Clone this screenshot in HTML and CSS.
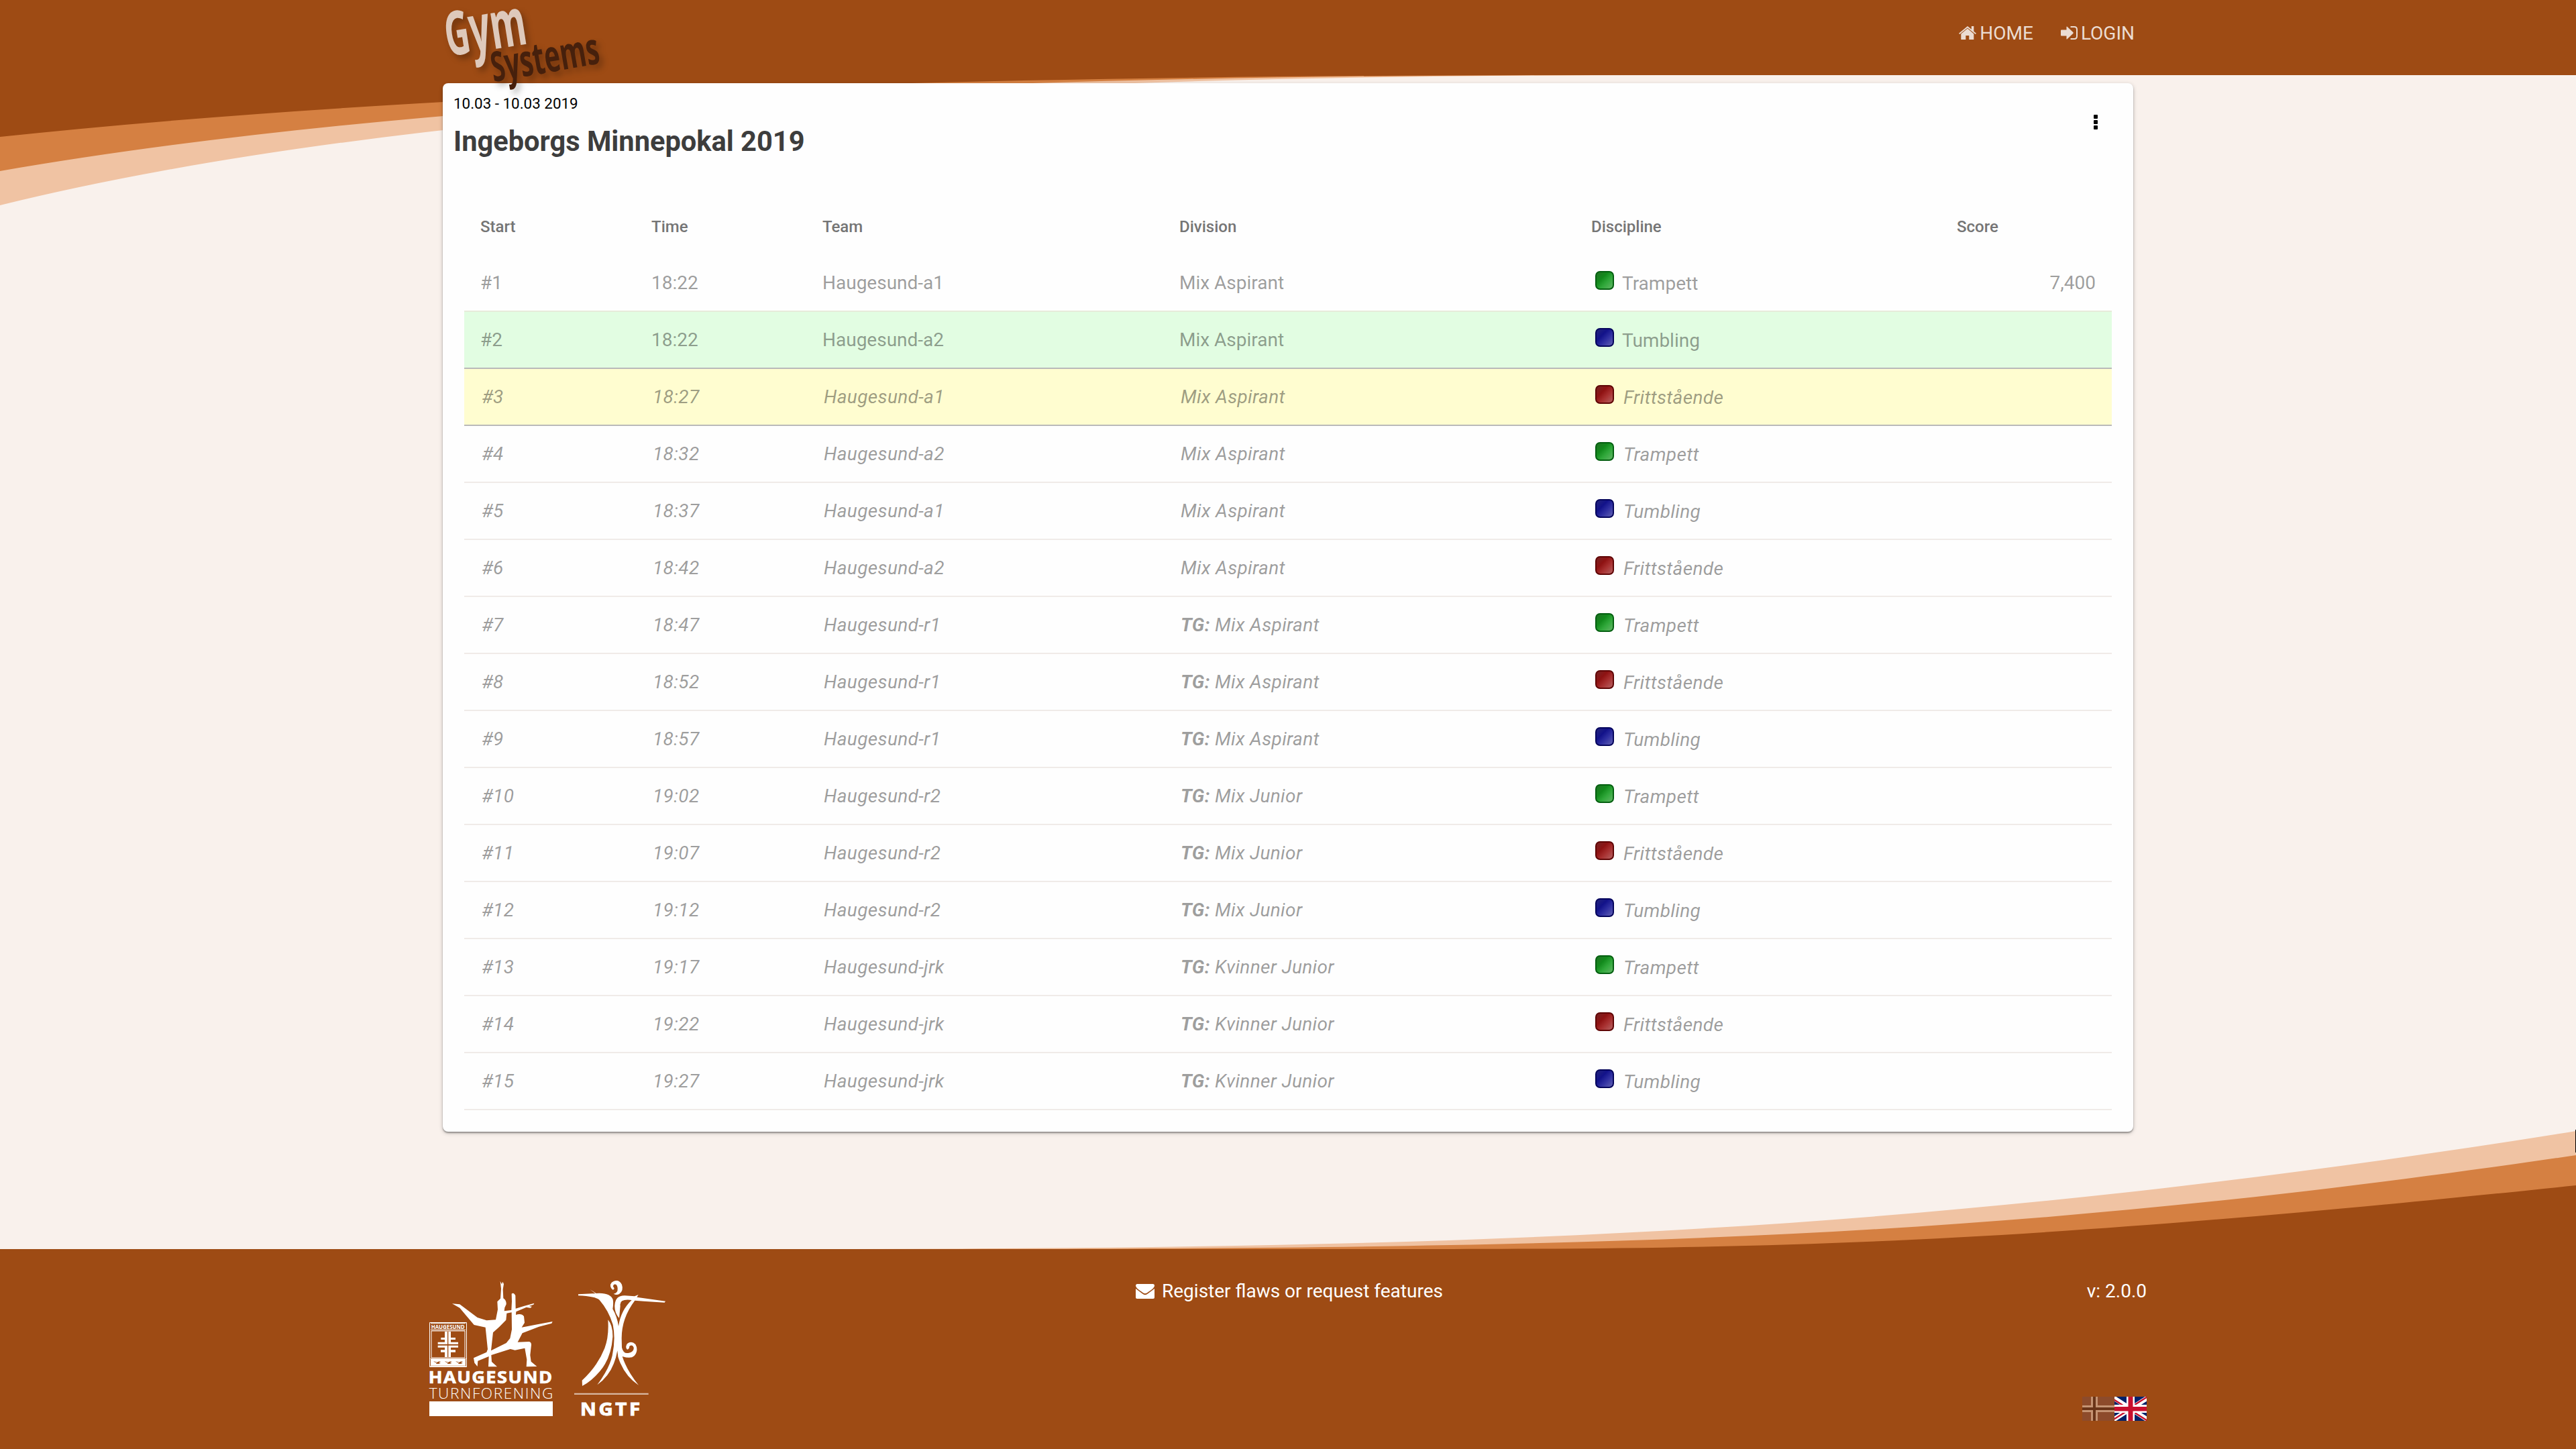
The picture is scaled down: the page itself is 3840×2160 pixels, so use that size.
FILE: index.html
```html
<!DOCTYPE html>
<html lang="en">
<head>
<meta charset="utf-8">
<title>GymSystems</title>
<link rel="stylesheet" href="styles.css">
</head>
<body>
<svg class="swoosh swoosh-top" viewBox="0 0 3840 320"><path class="light" d="M0 0V306Q784 112 2477 112H3840V0z"/><path class="mid" d="M0 0V255Q824 112 2380 112H3840V0z"/><path class="dark" d="M0 0V204Q864 112 2354 112H3840V0z"/></svg>
<svg class="swoosh swoosh-bottom" viewBox="0 1660 3840 203"><path class="light" d="M3840 1863V1686C2840 1846 2140 1862 1140 1862V1863z"/><path class="mid" d="M3840 1863V1722C2940 1855 2340 1862 1240 1862V1863z"/><path class="dark" d="M3840 1863V1767C2990 1856 2640 1862 2090 1862V1863z"/></svg>
<span class="edge-mark"></span>
<header class="topbar">
  <svg class="brand" viewBox="0 0 260 150"><g transform="rotate(-9 54 82)"><text class="brand-gym" x="28" y="80" textLength="122" lengthAdjust="spacingAndGlyphs">G<tspan class="brand-tall">ym</tspan></text></g><g transform="rotate(-10 98 123)"><text class="brand-systems" x="96" y="122" textLength="163" lengthAdjust="spacingAndGlyphs">S<tspan class="brand-tall">ystems</tspan></text></g></svg>
  <nav class="menu">
    <a class="home"><svg width="26" height="20" viewBox="0 0 26 20"><path d="M13 3.6 3.3 11.6V20h7v-6h5v6h7v-8.400z"/><path d="M13 0 0 10.700l1.300 1.400L13 2.500l11.700 9.600 1.300-1.400-3.700-3V0h-3.500v4.800z"/></svg>HOME</a>
    <a class="login"><svg width="25" height="20" viewBox="0 0 25 20"><path d="M0 6.500Q0 5.500 1 5.500H8.500V1Q8.500 0 9.500.7L18.500 9.300Q19 10 18.500 10.700L9.500 19.300Q8.500 20 8.500 19V14.500H1Q0 14.500 0 13.500z"/><path class="stroke" d="M14.500 1H20Q24 1 24 5V15Q24 19 20 19H14.500"/></svg>LOGIN</a>
  </nav>
</header>
<main class="card">
  <div class="card-head">
    <div><p class="date">10.03 - 10.03 2019</p><h1>Ingeborgs Minnepokal 2019</h1></div>
    <div class="more"><i></i><i></i><i></i></div>
  </div>
  <table>
    <colgroup><col class="c-start"><col class="c-time"><col class="c-team"><col class="c-division"><col class="c-discipline"><col class="c-score"></colgroup>
    <thead><tr><th>Start</th><th>Time</th><th>Team</th><th>Division</th><th>Discipline</th><th>Score</th></tr></thead>
    <tbody>
      <tr class="done before-current"><td>#1</td><td>18:22</td><td>Haugesund-a1</td><td>Mix Aspirant</td><td><div class="disc"><b class="sq green"></b><span>Trampett</span></div></td><td class="score">7,400</td></tr>
      <tr class="done current"><td>#2</td><td>18:22</td><td>Haugesund-a2</td><td>Mix Aspirant</td><td><div class="disc"><b class="sq blue"></b><span>Tumbling</span></div></td><td></td></tr>
      <tr class="next"><td>#3</td><td>18:27</td><td>Haugesund-a1</td><td>Mix Aspirant</td><td><div class="disc"><b class="sq red"></b><span>Frittstående</span></div></td><td></td></tr>
      <tr><td>#4</td><td>18:32</td><td>Haugesund-a2</td><td>Mix Aspirant</td><td><div class="disc"><b class="sq green"></b><span>Trampett</span></div></td><td></td></tr>
      <tr><td>#5</td><td>18:37</td><td>Haugesund-a1</td><td>Mix Aspirant</td><td><div class="disc"><b class="sq blue"></b><span>Tumbling</span></div></td><td></td></tr>
      <tr><td>#6</td><td>18:42</td><td>Haugesund-a2</td><td>Mix Aspirant</td><td><div class="disc"><b class="sq red"></b><span>Frittstående</span></div></td><td></td></tr>
      <tr><td>#7</td><td>18:47</td><td>Haugesund-r1</td><td><strong>TG:</strong> Mix Aspirant</td><td><div class="disc"><b class="sq green"></b><span>Trampett</span></div></td><td></td></tr>
      <tr><td>#8</td><td>18:52</td><td>Haugesund-r1</td><td><strong>TG:</strong> Mix Aspirant</td><td><div class="disc"><b class="sq red"></b><span>Frittstående</span></div></td><td></td></tr>
      <tr><td>#9</td><td>18:57</td><td>Haugesund-r1</td><td><strong>TG:</strong> Mix Aspirant</td><td><div class="disc"><b class="sq blue"></b><span>Tumbling</span></div></td><td></td></tr>
      <tr><td>#10</td><td>19:02</td><td>Haugesund-r2</td><td><strong>TG:</strong> Mix Junior</td><td><div class="disc"><b class="sq green"></b><span>Trampett</span></div></td><td></td></tr>
      <tr><td>#11</td><td>19:07</td><td>Haugesund-r2</td><td><strong>TG:</strong> Mix Junior</td><td><div class="disc"><b class="sq red"></b><span>Frittstående</span></div></td><td></td></tr>
      <tr><td>#12</td><td>19:12</td><td>Haugesund-r2</td><td><strong>TG:</strong> Mix Junior</td><td><div class="disc"><b class="sq blue"></b><span>Tumbling</span></div></td><td></td></tr>
      <tr><td>#13</td><td>19:17</td><td>Haugesund-jrk</td><td><strong>TG:</strong> Kvinner Junior</td><td><div class="disc"><b class="sq green"></b><span>Trampett</span></div></td><td></td></tr>
      <tr><td>#14</td><td>19:22</td><td>Haugesund-jrk</td><td><strong>TG:</strong> Kvinner Junior</td><td><div class="disc"><b class="sq red"></b><span>Frittstående</span></div></td><td></td></tr>
      <tr><td>#15</td><td>19:27</td><td>Haugesund-jrk</td><td><strong>TG:</strong> Kvinner Junior</td><td><div class="disc"><b class="sq blue"></b><span>Tumbling</span></div></td><td></td></tr>
    </tbody>
  </table>
</main>
<footer>
  <div class="footer-inner">
    <div class="logos">
      <svg class="logo-ht" width="184" height="202" viewBox="60 87 552 606">
        <path d="M377 89L384 103L388 92L393 102L389 126L391 166Q405 175 404 193L397 208L395 223L427 219L429 180L428 146Q437 137 445 154L446 212L485 200L529 188L526 194L506 201L519 203L512 209L494 206L448 226L447 240Q472 232 483 247L486 275L473 296L535 284L611 270L607 278L550 293L476 322L455 362L506 360Q516 362 516 374L511 420L515 449L541 471L494 472L496 440L487 389L443 398L422 393L337 420L339 450L363 472L324 472L326 426L277 446L275 471L262 455L258 433L316 407L321 394L311 296L260 285L196 209L162 190L196 193L275 252L316 265L357 262L366 216L364 181L378 167L381 123zM345 319L336 400L404 366L421 345L429 305L428 229L406 233L403 263L372 295z" fill-rule="evenodd"/>
        <g class="line"><path d="M61.500 274.500h165v198h-165zM66 278h156M66 307h156M69 312h150v120H69zM64 436h160M64 469h160" stroke-width="3"/></g>
        <text x="68" y="302" class="shield-label" textLength="150" lengthAdjust="spacingAndGlyphs">HAUGESUND</text>
        <path d="M129 315h12v56H98v-9h31v-11h-17v-9h17zM145 315h11v27h21v9h-21v11h33v9h-44zM98 377h43v52h-12v-22h-18v-10h18v-11H98zM145 377h44v9h-33v11h21v10h-21v22h-11zM66 438h156v29H66z"/>
        <path class="birds" d="M78 447q10 3 17 5q8-6 17-2q-7 2-9 6l8 3h-22l5-5q-8 1-16-7zM128 447q10 3 17 5q8-6 17-2q-7 2-9 6l8 3h-22l5-5q-8 1-16-7zM177 447q10 3 17 5q8-6 17-2q-7 2-9 6l8 3h-22l5-5q-8 1-16-7z"/>
        <text x="56" y="547" class="ht-name" textLength="558" lengthAdjust="spacingAndGlyphs">HAUGESUND</text>
        <text x="59" y="614" class="ht-sub" textLength="554" lengthAdjust="spacing">TURNFORENING</text>
        <path d="M60 627h552v66H60z"/>
      </svg>
      <svg class="logo-ngtf" width="136" height="202" viewBox="708 87 408 606">
        <path d="M884 90Q908 80 921 105Q930 133 909 147Q897 154 884 146Q904 143 902 121Q900 100 886 104Q878 111 886 119Q889 125 881 128Q868 119 870 104Q874 94 884 90z"/>
        <path d="M726 148L820 143Q872 144 881 172Q884 188 880 214Q900 248 906 291Q916 220 965 174Q908 167 914 200L909 255Q887 230 889 197Q892 153 934 154L978 157L995 150L988 161L1116 179L1112 185L1018 179L979 176Q920 254 920 344L921 386Q928 417 953 410Q976 405 974 386Q968 370 955 380Q954 394 945 395Q934 384 945 369Q964 354 982 372Q997 399 976 424Q961 438 923 426Q943 489 996 555Q930 511 904 428L901 400Q884 501 811 553Q865 480 878 423Q894 348 881 284Q862 221 821 174Q804 157 726 154zM779 127L807 145L843 162Q862 172 865 187Q859 162 820 158z"/>
        <path d="M859 262Q881 288 880 339Q873 434 823 492Q784 538 744 558L743 533Q812 470 844 389Q864 337 859 262z"/>
        <path class="rule" d="M708 590h332v7H708z"/>
        <text x="735" y="691" class="ngtf-name" textLength="278" lengthAdjust="spacingAndGlyphs">NGTF</text>
      </svg>
    </div>
    <a class="contact"><svg width="28" height="22" viewBox="0 0 28 22"><path d="M2 0H26Q28 0 28 2.500C28 6 22 9.500 18 12.500Q14 16 10 12.500C6 9.500 0 6 0 2.500Q0 0 2 0z"/><path d="M0 7L10 14.500Q14 18 18 14.500L28 7V20Q28 22 26 22H2Q0 22 0 20z"/></svg>Register flaws or request features</a>
    <div class="meta">
      <span>v: 2.0.0</span>
      <div class="flags">
        <svg class="flag-no" width="48" height="36" viewBox="0 0 48 36"><path fill="#754b4f" d="M0 0h48v36H0z"/><path fill="#fff" d="M13 0h10v36H13zM0 13h48v10H0z"/><path fill="#1c1420" d="M16 0h4v36h-4zM0 16h48v4H0z"/></svg>
        <svg width="48" height="36" viewBox="0 0 48 36"><path fill="#012169" d="M0 0h48v36H0z"/><path stroke="#fff" stroke-width="7" d="M-4 0L52 36M52 0L-4 36"/><path stroke="#c8102e" stroke-width="2.500" d="M-3 3L24 20M24 16L51-1M24 20L51 37M-3 35L24 18"/><path fill="#fff" d="M18 0h12v36H18zM0 12h48v12H0z"/><path fill="#c8102e" d="M20.500 0h7v36h-7zM0 15h48v6.500H0z"/></svg>
      </div>
    </div>
  </div>
</footer>
</body>
</html>
```
FILE: styles.css
```css
* { box-sizing: border-box; }
html, body { height: 100%; }
body {
  margin: 0;
  position: relative;
  display: flex;
  flex-direction: column;
  overflow: hidden;
  background: #f9f1ec;
  font-family: Roboto, "Liberation Sans", sans-serif;
  font-size: 28px;
  color: #000;
}
svg { display: block; }

.swoosh { position: absolute; left: 0; width: 3840px; z-index: -1; }
.swoosh-top { top: 0; height: 320px; }
.swoosh-bottom { bottom: 297px; height: 203px; }
.light { fill: #f0c3a3; }
.mid { fill: #d58042; }
.dark { fill: #9e4b14; }
.edge-mark { position: absolute; right: 0; top: 1684px; width: 1px; height: 34px; background: #000; }

.topbar {
  height: 112px;
  flex: none;
  padding: 0 658px 0 640px;
  display: flex;
  justify-content: space-between;
  position: relative;
  z-index: 2;
}
.brand { width: 260px; height: 150px; overflow: visible; filter: drop-shadow(5px 6px 5px rgba(0, 0, 0, .28)); }
.brand text { font-family: "Open Sans", sans-serif; font-weight: 700; }
.brand-gym { font-size: 91px; fill: #dec9bb; }
.brand-gym .brand-tall { font-size: 98px; }
.brand-systems { font-size: 62px; fill: #46200c; }
.brand-systems .brand-tall { font-size: 66px; }
.menu { display: flex; gap: 41px; padding-top: 33px; color: #ebdcd2; line-height: 33px; }
.menu a { display: flex; gap: 5px; }
.menu svg { margin-top: 6px; fill: #ebdcd2; }
.menu .stroke { fill: none; stroke: #ebdcd2; stroke-width: 2; }

.card {
  width: 2520px;
  height: 1563px;
  flex: none;
  margin: 12px 0 0 660px;
  background: #fefefe;
  border-radius: 8px;
  box-shadow: 0 2px 2px rgba(0, 0, 0, .3), 0 2px 6px rgba(0, 0, 0, .22);
  padding: 0 32px 32px;
}
.card-head { display: flex; justify-content: space-between; height: 171px; margin-left: -16px; }
.date { margin: 17px 0 0; font-size: 22.400px; line-height: 26px; }
h1 { margin: 19px 0 0; font-size: 41.600px; line-height: 50px; font-weight: 700; color: #3d3d3d; }
.more { display: flex; flex-direction: column; gap: 2px; margin: 47px 21px 0 0; }
.more i { width: 6px; height: 6px; background: #000; border-radius: 1px; }

table { width: 2456px; table-layout: fixed; border-collapse: separate; border-spacing: 0; text-align: left; }
.c-start { width: 255px; }
.c-time { width: 255px; }
.c-team { width: 532px; }
.c-division { width: 614px; }
.c-discipline { width: 545px; }
.c-score { width: 255px; }
th { height: 85px; padding: 0 24px; font-size: 24px; font-weight: 500; color: #757575; }
td { height: 85px; padding: 0 24px 0 26px; border-bottom: 2px solid #f0ebe8; color: rgba(0, 0, 0, .4); font-style: italic; letter-spacing: .35px; }
.done td { padding-left: 24px; font-style: normal; letter-spacing: 0; }
.before-current td { border-bottom-color: #e7ebda; }
.current td { background: #e2fde2; border-bottom-color: #b9b9b9; }
.next td { background: #fffdd0; border-bottom-color: #b9b9b9; }
td.score { text-align: right; }
.disc { display: flex; align-items: center; gap: 14px; padding-left: 4px; }
.done .disc { gap: 12px; padding-left: 6px; }
.disc span { position: relative; top: 1px; }
.sq { width: 28px; height: 28px; border: 2px solid; border-radius: 7px; margin-top: -7px; }
.green { border-color: #045f10; background: linear-gradient(135deg, #217123, #128a1c 35%, #30a83a 62%, #62b566); }
.blue { border-color: #05055c; background: linear-gradient(135deg, #24247a, #12128a 35%, #3030a2 62%, #6262b2); }
.red { border-color: #5f0505; background: linear-gradient(135deg, #752222, #8e1212 35%, #a83030 62%, #b56262); }

footer { height: 298px; flex: none; margin-top: auto; background: #9e4b14; color: #fff; }
.footer-inner { width: 2560px; margin: 0 auto; padding-top: 47px; display: grid; grid-template-columns: 1053px 1fr auto; }
.logos { display: flex; gap: 32px; fill: #fff; }
.logos svg { overflow: visible; }
.line { fill: none; stroke: #fff; }
.birds { fill: #9e4b14; }
.shield-label { font: 700 25px "Open Sans", sans-serif; }
.ht-name { font: 700 74px "Open Sans", sans-serif; letter-spacing: 4px; stroke: #fff; stroke-width: 2px; }
.ht-sub { font: 300 68px "Open Sans", sans-serif; }
.ngtf-name { font: 700 80px "Open Sans", sans-serif; letter-spacing: 10px; stroke: #fff; stroke-width: 3px; }
.rule { opacity: .6; }
.contact { display: flex; gap: 11px; height: 33px; line-height: 33px; margin-top: -1px; }
.contact svg { fill: #fff; margin-top: 6px; }
.meta { display: flex; flex-direction: column; align-items: flex-end; margin-top: -1px; line-height: 33px; }
.flags { display: flex; margin-top: 141px; }
.flag-no { opacity: .4; }
```
